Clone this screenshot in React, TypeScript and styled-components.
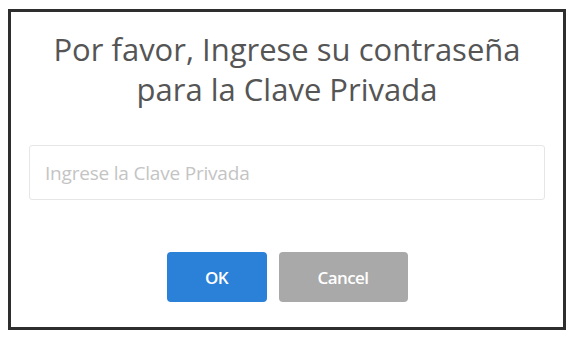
import React from "react";
import styled, { createGlobalStyle } from "styled-components";

const Global = createGlobalStyle`
  html, body { margin: 0; padding: 0; background: #ffffff; }
  body { font-family: "Open Sans", "Noto Sans", sans-serif; }
`;

const Frame = styled.div`
  box-sizing: border-box;
  margin: 9px 8px 0 8px;
  width: 558px;
  height: 321px;
  border: 3px solid #2e2e2e;
  background: #fff;
  display: flex;
  flex-direction: column;
  align-items: center;
  padding: 17px 18px 0 18px;
`;

const Title = styled.h2`
  margin: 0;
  font-weight: 400;
  font-size: 31px;
  line-height: 40px;
  color: #555555;
  text-align: center;
  white-space: nowrap;
`;

const Field = styled.input`
  box-sizing: border-box;
  margin-top: 36px;
  width: 516px;
  height: 55px;
  border: 1px solid #e6e6e6;
  border-radius: 3px;
  padding: 0 15px;
  font-family: "Open Sans", "Noto Sans", sans-serif;
  font-size: 19px;
  letter-spacing: -0.2px;
  color: #555;
  outline: none;
  &::placeholder { color: #c4c4c4; }
`;

const Actions = styled.div`
  display: flex;
  gap: 12px;
  margin-top: 52px;
`;

const Button = styled.button<{ $variant: "primary" | "secondary" }>`
  height: 50px;
  width: ${(p) => (p.$variant === "primary" ? "100px" : "129px")};
  border: none;
  border-radius: 4px;
  background: ${(p) => (p.$variant === "primary" ? "#2b80d8" : "#a9a9a9")};
  color: #fff;
  font-family: "Open Sans", "Noto Sans", sans-serif;
  font-weight: 600;
  font-size: 17px;
  letter-spacing: -0.6px;
  cursor: pointer;
`;

export default function App() {
  return (
    <>
      <Global />
      <Frame>
        <Title>
          Por favor, Ingrese su contraseña
          <br />
          para la Clave Privada
        </Title>
        <Field type="password" placeholder="Ingrese la Clave Privada" />
        <Actions>
          <Button $variant="primary">OK</Button>
          <Button $variant="secondary">Cancel</Button>
        </Actions>
      </Frame>
    </>
  );
}
